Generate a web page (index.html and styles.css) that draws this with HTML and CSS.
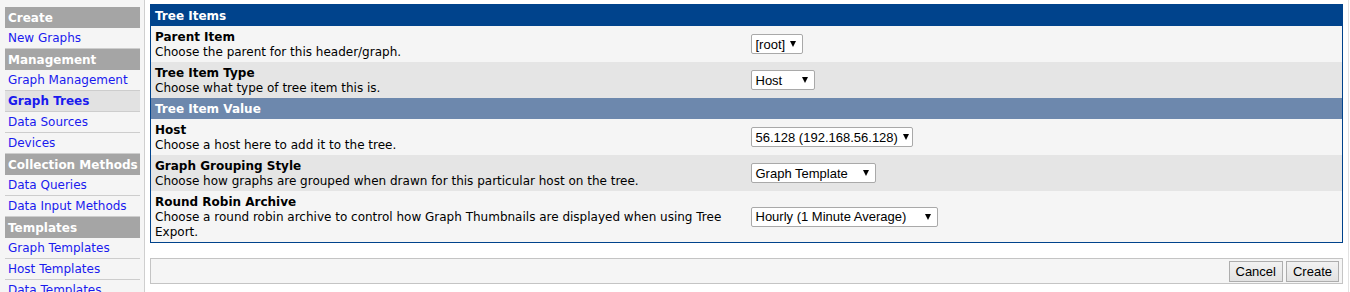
FILE: index.html
```html
<!DOCTYPE html>
<html lang="en">
<head>
<meta charset="UTF-8">
<title>Graph Trees</title>
<link rel="stylesheet" href="styles.css">
</head>
<body>

<div class="page">
  <div class="sidebar">
    <div class="menu">
      <div class="menu-head">Create</div>
      <a class="menu-item" href="#">New Graphs</a>
      <div class="menu-head">Management</div>
      <a class="menu-item" href="#">Graph Management</a>
      <a class="menu-item current" href="#">Graph Trees</a>
      <a class="menu-item" href="#">Data Sources</a>
      <a class="menu-item" href="#">Devices</a>
      <div class="menu-head">Collection Methods</div>
      <a class="menu-item" href="#">Data Queries</a>
      <a class="menu-item" href="#">Data Input Methods</a>
      <div class="menu-head">Templates</div>
      <a class="menu-item" href="#">Graph Templates</a>
      <a class="menu-item" href="#">Host Templates</a>
      <a class="menu-item" href="#">Data Templates</a>
    </div>
  </div>

  <div class="content">
    <div class="panel">
      <div class="panel-head">Tree Items</div>

      <div class="field light">
        <div class="field-text">
          <div class="field-name">Parent Item</div>
          <div class="field-desc">Choose the parent for this header/graph.</div>
        </div>
        <div class="field-input">
          <div class="select">[root]<span class="arrow"></span></div>
        </div>
      </div>

      <div class="field dark">
        <div class="field-text">
          <div class="field-name">Tree Item Type</div>
          <div class="field-desc">Choose what type of tree item this is.</div>
        </div>
        <div class="field-input">
          <div class="select select-type">Host<span class="arrow"></span></div>
        </div>
      </div>

      <div class="panel-subhead">Tree Item Value</div>

      <div class="field light">
        <div class="field-text">
          <div class="field-name">Host</div>
          <div class="field-desc">Choose a host here to add it to the tree.</div>
        </div>
        <div class="field-input">
          <div class="select select-host">56.128 (192.168.56.128)<span class="arrow"></span></div>
        </div>
      </div>

      <div class="field dark">
        <div class="field-text">
          <div class="field-name">Graph Grouping Style</div>
          <div class="field-desc">Choose how graphs are grouped when drawn for this particular host on the tree.</div>
        </div>
        <div class="field-input">
          <div class="select select-group">Graph Template<span class="arrow"></span></div>
        </div>
      </div>

      <div class="field light">
        <div class="field-text">
          <div class="field-name">Round Robin Archive</div>
          <div class="field-desc">Choose a round robin archive to control how Graph Thumbnails are displayed when using Tree Export.</div>
        </div>
        <div class="field-input">
          <div class="select select-rra">Hourly (1 Minute Average)<span class="arrow"></span></div>
        </div>
      </div>
    </div>

    <div class="actions">
      <button type="button">Cancel</button>
      <button type="submit">Create</button>
    </div>
  </div>
</div>

</body>
</html>
```

FILE: styles.css
```css
body {
  margin: 0;
  padding: 0;
  background-color: white;
  font-family: "DejaVu Sans", Verdana, sans-serif;
  font-size: 12px;
  color: black;
  height: 100vh;
  overflow: hidden;
}

.page {
  display: flex;
  height: 100%;
}

/* left menu */
.sidebar {
  width: 145px;
  flex-shrink: 0;
  background: #f5f5f5;
  border-right: 1px solid #cfcfcf;
  padding: 7px 0 0 5px;
  box-sizing: border-box;
}

.menu {
  width: 135px;
  display: flex;
  flex-direction: column;
}

.menu-head {
  height: 21px;
  line-height: 22px;
  padding-left: 3px;
  background: #a5a5a5;
  color: white;
  font-weight: bold;
  font-size: 12px;
  white-space: nowrap;
}

.menu-item {
  height: 20px;
  line-height: 21px;
  padding-left: 3px;
  border-bottom: 1px solid #cdcdcd;
  color: #1a1aee;
  text-decoration: none;
  white-space: nowrap;
}

.menu-item.current {
  background: #e2e2e2;
  font-weight: bold;
}

/* main area */
.content {
  flex: 1;
  padding: 4px 5px 0 5px;
  border-right: 1px solid #e2e2e2;
  margin-right: 1px;
}

.panel {
  border: 1px solid #00438c;
}

.panel-head {
  height: 21px;
  line-height: 22px;
  padding-left: 4px;
  background: #00438c;
  color: white;
  font-weight: bold;
}

.panel-subhead {
  height: 21px;
  line-height: 22px;
  padding-left: 4px;
  background: #6d88ad;
  color: white;
  font-weight: bold;
}

.field {
  display: flex;
  align-items: center;
}

.field.light {
  background: #f5f5f5;
}

.field.dark {
  background: #e5e5e5;
}

.field-text {
  width: 50%;
  padding: 4px 4px 2px;
  line-height: 15px;
}

.field-name {
  font-weight: bold;
}

.field-input {
  width: 50%;
  padding: 3px 4px;
}

.select {
  display: inline-flex;
  align-items: center;
  justify-content: space-between;
  height: 18px;
  padding: 0 6px 0 4px;
  border: 1px solid #a9a9a9;
  border-radius: 2px;
  background: white;
  font-family: "Liberation Sans", Arial, sans-serif;
  font-size: 13px;
  white-space: nowrap;
  gap: 5px;
  box-sizing: content-box;
}

.select .arrow {
  flex-shrink: 0;
  width: 0;
  height: 0;
  border-left: 3.5px solid transparent;
  border-right: 3.5px solid transparent;
  border-top: 6px solid black;
}

.select-type {
  width: 52px;
}

.select-host {
  width: 150px;
}

.select-group {
  width: 113px;
}

.select-rra {
  width: 175px;
}

.actions {
  margin-top: 15px;
  height: 24px;
  border: 1px solid #c4c4c4;
  background: #f5f5f5;
  display: flex;
  justify-content: flex-end;
  align-items: center;
  gap: 3px;
  padding: 0 3px;
}

button {
  height: 21px;
  padding: 0 6px;
  font-family: "Liberation Sans", Arial, sans-serif;
  font-size: 13px;
  color: black;
  background: linear-gradient(#f2f2f2, #e2e2e2);
  border: 1px solid #adadad;
  border-radius: 0;
  cursor: pointer;
}

button:hover {
  background: linear-gradient(#eaf6fd, #d9f0fc);
}
```
